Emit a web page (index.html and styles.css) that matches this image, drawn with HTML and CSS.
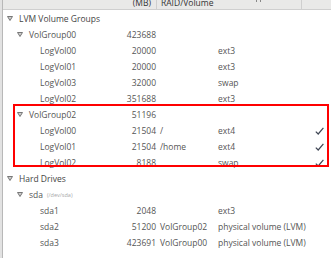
FILE: index.html
```html
<!DOCTYPE html>
<html>
<head>
<meta charset="utf-8">
<link rel="stylesheet" href="styles.css">
</head>
<body>
<div class="frame">
  <div class="pane">
    <div class="header">
      <div class="h-name"></div>
      <div class="h-size">(MB)</div>
      <div class="h-mount">RAID/Volume</div>
      <div class="h-fs"><span class="tick"></span></div>
      <div class="h-fmt"></div>
    </div>
    <div class="rows">
      <div class="row"><div class="name l0"><svg class="tri" viewBox="0 0 6 5"><polygon points="0.5,0.5 5.5,0.5 3,4.5"/></svg><span class="group">LVM Volume Groups</span></div><div class="size"></div><div class="mount"></div><div class="fs"></div><div class="fmt"></div></div>
      <div class="row"><div class="name l1"><svg class="tri" viewBox="0 0 6 5"><polygon points="0.5,0.5 5.5,0.5 3,4.5"/></svg><span>VolGroup00</span></div><div class="size">423688</div><div class="mount"></div><div class="fs"></div><div class="fmt"></div></div>
      <div class="row"><div class="name l2"><span>LogVol00</span></div><div class="size">20000</div><div class="mount"></div><div class="fs">ext3</div><div class="fmt"></div></div>
      <div class="row"><div class="name l2"><span>LogVol01</span></div><div class="size">20000</div><div class="mount"></div><div class="fs">ext3</div><div class="fmt"></div></div>
      <div class="row"><div class="name l2"><span>LogVol03</span></div><div class="size">32000</div><div class="mount"></div><div class="fs">swap</div><div class="fmt"></div></div>
      <div class="row"><div class="name l2"><span>LogVol02</span></div><div class="size">351688</div><div class="mount"></div><div class="fs">ext3</div><div class="fmt"></div></div>
      <div class="row"><div class="name l1"><svg class="tri" viewBox="0 0 6 5"><polygon points="0.5,0.5 5.5,0.5 3,4.5"/></svg><span>VolGroup02</span></div><div class="size">51196</div><div class="mount"></div><div class="fs"></div><div class="fmt"></div></div>
      <div class="row"><div class="name l2"><span>LogVol00</span></div><div class="size">21504</div><div class="mount">/</div><div class="fs">ext4</div><div class="fmt"><svg class="check" viewBox="0 0 9 8"><path d="M0.8 4.6 L3.2 7 L8.4 0.8"/></svg></div></div>
      <div class="row"><div class="name l2"><span>LogVol01</span></div><div class="size">21504</div><div class="mount">/home</div><div class="fs">ext4</div><div class="fmt"><svg class="check" viewBox="0 0 9 8"><path d="M0.8 4.6 L3.2 7 L8.4 0.8"/></svg></div></div>
      <div class="row"><div class="name l2"><span>LogVol02</span></div><div class="size">8188</div><div class="mount"></div><div class="fs">swap</div><div class="fmt"><svg class="check" viewBox="0 0 9 8"><path d="M0.8 4.6 L3.2 7 L8.4 0.8"/></svg></div></div>
      <div class="row"><div class="name l0"><svg class="tri" viewBox="0 0 6 5"><polygon points="0.5,0.5 5.5,0.5 3,4.5"/></svg><span class="group">Hard Drives</span></div><div class="size"></div><div class="mount"></div><div class="fs"></div><div class="fmt"></div></div>
      <div class="row"><div class="name l1"><svg class="tri" viewBox="0 0 6 5"><polygon points="0.5,0.5 5.5,0.5 3,4.5"/></svg><span class="disk">sda</span><span class="dev">(/dev/sda)</span></div><div class="size"></div><div class="mount"></div><div class="fs"></div><div class="fmt"></div></div>
      <div class="row"><div class="name l2"><span>sda1</span></div><div class="size">2048</div><div class="mount"></div><div class="fs">ext3</div><div class="fmt"></div></div>
      <div class="row"><div class="name l2"><span>sda2</span></div><div class="size">51200</div><div class="mount">VolGroup02</div><div class="fs">physical volume (LVM)</div><div class="fmt"></div></div>
      <div class="row"><div class="name l2"><span>sda3</span></div><div class="size">423691</div><div class="mount">VolGroup00</div><div class="fs">physical volume (LVM)</div><div class="fmt"></div></div>
    </div>
    <div class="highlight"></div>
  </div>
</div>
</body>
</html>
```

FILE: styles.css
```css
html, body {
  margin: 0;
  padding: 0;
  background: #ffffff;
}
body {
  width: 331px;
  height: 258px;
  overflow: hidden;
  font-family: "Open Sans", "Noto Sans", sans-serif;
  font-size: 8.5px;
  color: #555555;
}
.frame {
  display: flex;
  height: 258px;
  border-left: 2px solid #e2e2e2;
}
.pane {
  position: relative;
  flex: 1;
  border-left: 1px solid #b8b8b8;
  background: #ffffff;
}
.header, .row {
  display: grid;
  grid-template-columns: 119px 34px 59px 87px 29px;
  column-gap: 0;
}
.header {
  height: 9px;
  background: #e9e9e8;
  border-bottom: 1px solid #cfcfcf;
  overflow: hidden;
  color: #333333;
}
.header > div {
  line-height: 9px;
  margin-top: -2px;
  white-space: nowrap;
}
.h-size {
  text-align: right;
  padding-right: 5px;
  border-right: 1px solid #cfcfcf;
  margin-right: -1px;
}
.h-mount {
  padding-left: 5px;
}
.h-fs {
  border-right: 1px solid #cfcfcf;
  position: relative;
}
.tick {
  position: absolute;
  left: 41px;
  top: 2px;
  width: 3px;
  height: 2px;
  border-left: 1px solid #888;
  border-right: 1px solid #888;
}
.rows {
  padding-top: 0.5px;
}
.row {
  height: 16px;
  line-height: 16px;
  white-space: nowrap;
}
.name {
  display: flex;
  align-items: center;
}
.name.l0 { padding-left: 4px; }
.name.l1 { padding-left: 14px; }
.name.l2 { padding-left: 37px; }
.tri {
  width: 6px;
  height: 5px;
  margin-right: 6px;
  fill: #cfcfcf;
  stroke: #6a6a6a;
  stroke-width: 0.9;
  stroke-linejoin: round;
}
.group {
  color: #444444;
}
.dev {
  font-size: 5.5px;
  color: #a8a8a8;
  margin-left: 4px;
}
.size {
  text-align: right;
}
.mount {
  padding-left: 4px;
}
.fs {
  padding-left: 3px;
}
.fmt {
  display: flex;
  align-items: center;
  padding-left: 13px;
}
.check {
  width: 9px;
  height: 8px;
  fill: none;
  stroke: #3f4654;
  stroke-width: 1.2;
}
.highlight {
  position: absolute;
  left: 10px;
  top: 104px;
  width: 312px;
  height: 59px;
  border: 2px solid #ff0000;
}
```
